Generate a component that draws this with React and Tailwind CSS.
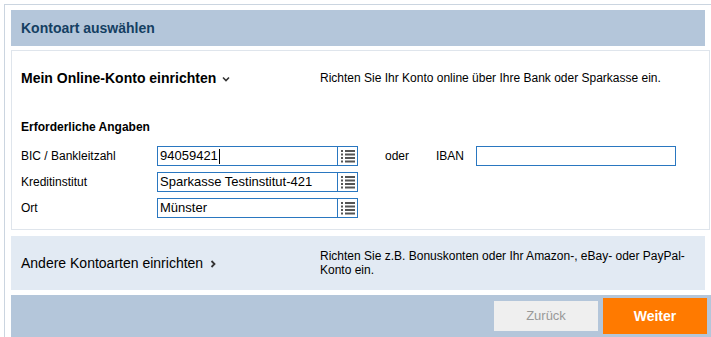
import React from "react";

function ListIcon() {
  return (
    <svg width="14" height="14" viewBox="0 0 14 14">
      {[1, 4.5, 8, 11.5].map((y) => (
        <g key={y} fill="#555">
          <rect x="0" y={y} width="2" height="2" />
          <rect x="4" y={y} width="10" height="2" />
        </g>
      ))}
    </svg>
  );
}

function Field({ value, caret }) {
  return (
    <div className="flex h-[20px]">
      <div className="w-[181px] h-[20px] border border-[#2a77c0] bg-white flex items-center px-[2px] text-[13px] text-black">
        {value}
        {caret && <span className="inline-block w-[1px] h-[15px] bg-black ml-[1px]" />}
      </div>
      <div className="w-[20px] h-[20px] border border-[#2a77c0] border-l-0 bg-white flex items-center justify-center">
        <ListIcon />
      </div>
    </div>
  );
}

export default function App() {
  return (
    <div className="w-[711px] h-[337px] overflow-hidden bg-white pl-[4px] pt-[4px] font-['Liberation_Sans',Arial,sans-serif]">
      <div className="h-full border-l border-t border-[#cbd5e0] pl-[6px] pt-[5px] flex flex-col">
        <div className="w-[694px] h-[36px] bg-[#b4c6da] flex items-center pl-[10px] text-[14px] font-bold text-[#143f62]">
          Kontoart auswählen
        </div>
        <div className="mt-[4px] w-[699px] h-[180px] border border-[#dfe5ec] bg-white pl-[9px] flex flex-col">
          <div className="flex items-center mt-[17px] h-[20px]">
            <div className="w-[299px] flex items-center text-[14px] font-bold text-black">
              Mein Online-Konto einrichten
              <svg width="10" height="8" viewBox="0 0 10 8" className="ml-[5px] mt-[2px]">
                <path d="M2 2.5 L5 5.5 L8 2.5" stroke="#333" strokeWidth="1.6" fill="none" />
              </svg>
            </div>
            <div className="text-[12px] text-black">
              Richten Sie Ihr Konto online über Ihre Bank oder Sparkasse ein.
            </div>
          </div>
          <div className="mt-[31px] text-[12px] font-bold text-black h-[16px] leading-[16px]">
            Erforderliche Angaben
          </div>
          <div className="mt-[11px] flex flex-col gap-[6px]">
            <div className="flex items-center">
              <div className="w-[136px] text-[12px] text-black">BIC / Bankleitzahl</div>
              <Field value="94059421" caret />
              <div className="w-[27px]" />
              <div className="w-[51px] text-[12px] text-black">oder</div>
              <div className="w-[40px] text-[12px] text-black">IBAN</div>
              <div className="w-[200px] h-[20px] border border-[#2a77c0] bg-white" />
            </div>
            <div className="flex items-center">
              <div className="w-[136px] text-[12px] text-black">Kreditinstitut</div>
              <Field value="Sparkasse Testinstitut-421" />
            </div>
            <div className="flex items-center">
              <div className="w-[136px] text-[12px] text-black">Ort</div>
              <Field value="Münster" />
            </div>
          </div>
        </div>
        <div className="mt-[6px] w-[694px] h-[54px] bg-[#e2eaf3] flex items-center pl-[10px]">
          <div className="w-[299px] flex items-center text-[14px] text-black">
            Andere Kontoarten einrichten
            <svg width="8" height="10" viewBox="0 0 8 10" className="ml-[6px] mt-[1px]">
              <path d="M2.5 2 L5.5 5 L2.5 8" stroke="#333" strokeWidth="1.8" fill="none" />
            </svg>
          </div>
          <div className="w-[380px] text-[12px] leading-[14px] text-black">
            Richten Sie z.B. Bonuskonten oder Ihr Amazon-, eBay- oder PayPal-
            <br />
            Konto ein.
          </div>
        </div>
        <div className="mt-[5px] flex-1 bg-[#b4c6da] flex items-center justify-end pr-[4px]">
          <div className="w-[104px] h-[30px] bg-[#efefef] flex items-center justify-center text-[13px] text-[#999]">
            Zurück
          </div>
          <div className="ml-[5px] w-[104px] h-[36px] bg-[#ff7a00] flex items-center justify-center text-[14px] font-bold text-white">
            Weiter
          </div>
        </div>
      </div>
    </div>
  );
}
